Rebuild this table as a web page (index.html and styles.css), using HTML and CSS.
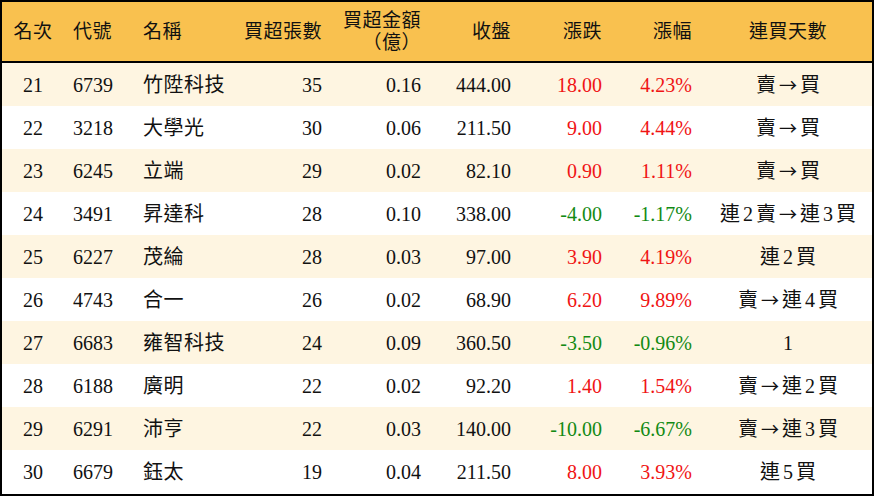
FILE: index.html
```html
<!DOCTYPE html>
<html lang="zh-Hant">
<head>
<meta charset="utf-8">
<title>買超排行</title>
<link rel="stylesheet" href="styles.css">
</head>
<body>
<div class="board">
  <div class="row head">
    <div class="c c1">名次</div>
    <div class="c c2">代號</div>
    <div class="c c3">名稱</div>
    <div class="c r">買超張數</div>
    <div class="c r two"><span>買超金額</span><span>（億）</span></div>
    <div class="c r">收盤</div>
    <div class="c r">漲跌</div>
    <div class="c r">漲幅</div>
    <div class="c c9">連買天數</div>
  </div>
  <div class="row odd">
    <div class="c c1">21</div><div class="c c2">6739</div><div class="c c3">竹陞科技</div>
    <div class="c r">35</div><div class="c r">0.16</div><div class="c r">444.00</div>
    <div class="c r up">18.00</div><div class="c r up">4.23%</div><div class="c c9">賣 <span class="arr">→</span> 買</div>
  </div>
  <div class="row">
    <div class="c c1">22</div><div class="c c2">3218</div><div class="c c3">大學光</div>
    <div class="c r">30</div><div class="c r">0.06</div><div class="c r">211.50</div>
    <div class="c r up">9.00</div><div class="c r up">4.44%</div><div class="c c9">賣 <span class="arr">→</span> 買</div>
  </div>
  <div class="row odd">
    <div class="c c1">23</div><div class="c c2">6245</div><div class="c c3">立端</div>
    <div class="c r">29</div><div class="c r">0.02</div><div class="c r">82.10</div>
    <div class="c r up">0.90</div><div class="c r up">1.11%</div><div class="c c9">賣 <span class="arr">→</span> 買</div>
  </div>
  <div class="row">
    <div class="c c1">24</div><div class="c c2">3491</div><div class="c c3">昇達科</div>
    <div class="c r">28</div><div class="c r">0.10</div><div class="c r">338.00</div>
    <div class="c r down">-4.00</div><div class="c r down">-1.17%</div><div class="c c9">連 2 賣 <span class="arr">→</span> 連 3 買</div>
  </div>
  <div class="row odd">
    <div class="c c1">25</div><div class="c c2">6227</div><div class="c c3">茂綸</div>
    <div class="c r">28</div><div class="c r">0.03</div><div class="c r">97.00</div>
    <div class="c r up">3.90</div><div class="c r up">4.19%</div><div class="c c9">連 2 買</div>
  </div>
  <div class="row">
    <div class="c c1">26</div><div class="c c2">4743</div><div class="c c3">合一</div>
    <div class="c r">26</div><div class="c r">0.02</div><div class="c r">68.90</div>
    <div class="c r up">6.20</div><div class="c r up">9.89%</div><div class="c c9">賣 <span class="arr">→</span> 連 4 買</div>
  </div>
  <div class="row odd">
    <div class="c c1">27</div><div class="c c2">6683</div><div class="c c3">雍智科技</div>
    <div class="c r">24</div><div class="c r">0.09</div><div class="c r">360.50</div>
    <div class="c r down">-3.50</div><div class="c r down">-0.96%</div><div class="c c9">1</div>
  </div>
  <div class="row">
    <div class="c c1">28</div><div class="c c2">6188</div><div class="c c3">廣明</div>
    <div class="c r">22</div><div class="c r">0.02</div><div class="c r">92.20</div>
    <div class="c r up">1.40</div><div class="c r up">1.54%</div><div class="c c9">賣 <span class="arr">→</span> 連 2 買</div>
  </div>
  <div class="row odd">
    <div class="c c1">29</div><div class="c c2">6291</div><div class="c c3">沛亨</div>
    <div class="c r">22</div><div class="c r">0.03</div><div class="c r">140.00</div>
    <div class="c r down">-10.00</div><div class="c r down">-6.67%</div><div class="c c9">賣 <span class="arr">→</span> 連 3 買</div>
  </div>
  <div class="row">
    <div class="c c1">30</div><div class="c c2">6679</div><div class="c c3">鈺太</div>
    <div class="c r">19</div><div class="c r">0.04</div><div class="c r">211.50</div>
    <div class="c r up">8.00</div><div class="c r up">3.93%</div><div class="c c9">連 5 買</div>
  </div>
</div>
</body>
</html>
```
FILE: styles.css
```css
* { box-sizing: border-box; }
html, body { margin: 0; padding: 0; background: #ffffff; }
body {
  width: 874px;
  height: 496px;
  overflow: hidden;
  font-family: "Liberation Serif", "Noto Sans CJK TC", serif;
  font-size: 20px;
  color: #111111;
}
.board {
  width: 874px;
  height: 496px;
  border: 2px solid #000000;
  display: flex;
  flex-direction: column;
}
.row {
  display: grid;
  grid-template-columns: 60px 71px 99px 100px 99px 90px 91px 90px 170px;
  height: 43px;
  align-items: center;
  background: #ffffff;
}
.row.odd { background: #fef5e1; }
.row.head {
  height: 61px;
  background: #f9c14f;
  border-bottom: 2px solid #000000;
}
.head .c { font-size: 19px; letter-spacing: 0.5px; }
.c { white-space: nowrap; line-height: 22px; }
.c1 { text-align: center; padding-left: 2px; }
.c2 { padding-left: 11px; }
.c3 { padding-left: 10px; letter-spacing: 0.5px; }
.r { text-align: right; padding-right: 10px; }
.c9 { text-align: center; padding-left: 2px; word-spacing: -2px; }
.arr { font-family: "Noto Sans CJK TC", sans-serif; font-size: 18px; }
.two { display: flex; flex-direction: column; align-items: flex-end; line-height: 22px; padding-top: 1px; }
.up { color: #f01414; }
.down { color: #138a13; }
```
